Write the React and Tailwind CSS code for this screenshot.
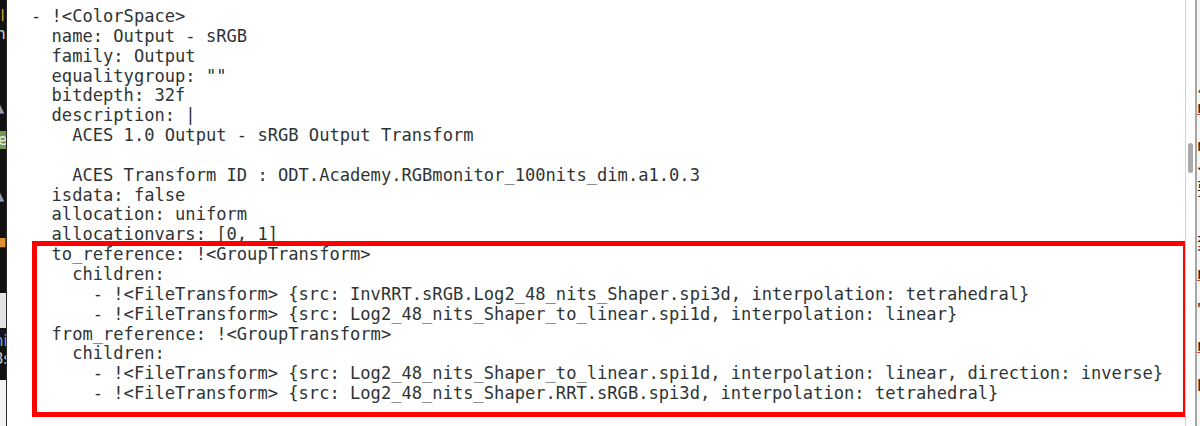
const lines = [
  '- !<ColorSpace>',
  '  name: Output - sRGB',
  '  family: Output',
  '  equalitygroup: ""',
  '  bitdepth: 32f',
  '  description: |',
  '    ACES 1.0 Output - sRGB Output Transform',
  '',
  '    ACES Transform ID : ODT.Academy.RGBmonitor_100nits_dim.a1.0.3',
  '  isdata: false',
  '  allocation: uniform',
  '  allocationvars: [0, 1]',
  '  to_reference: !<GroupTransform>',
  '    children:',
  '      - !<FileTransform> {src: InvRRT.sRGB.Log2_48_nits_Shaper.spi3d, interpolation: tetrahedral}',
  '      - !<FileTransform> {src: Log2_48_nits_Shaper_to_linear.spi1d, interpolation: linear}',
  '  from_reference: !<GroupTransform>',
  '    children:',
  '      - !<FileTransform> {src: Log2_48_nits_Shaper_to_linear.spi1d, interpolation: linear, direction: inverse}',
  '      - !<FileTransform> {src: Log2_48_nits_Shaper.RRT.sRGB.spi3d, interpolation: tetrahedral}',
];

// partial glyphs of the window on the right edge
const sideGlyphs = [
  { t: 'く', cls: 'h-[26px]' },
  { t: '', cls: 'h-[38px]' },
  { t: 'ハ', cls: 'h-[20px]' },
  { t: 'n', cls: 'h-[38px] underline decoration-red-500' },
  { t: 'n', cls: 'h-[20px]' },
  { t: '、', cls: 'h-[24px]' },
  { t: '要', cls: 'h-[54px]' },
  { t: '変', cls: 'h-[30px]' },
  { t: 'n', cls: 'h-[36px] underline decoration-red-500' },
  { t: "'s", cls: 'h-[36px]' },
  { t: 'n', cls: 'h-[40px] underline decoration-red-500' },
  { t: 'l', cls: 'h-[30px]' },
];

function LeftStrip() {
  return (
    <div className="w-[7px] shrink-0 h-full bg-[#121212] border-r border-[#2a2a2a] overflow-hidden flex flex-col text-[15px] leading-[18px] font-['DejaVu_Sans',sans-serif]">
      <div className="h-[7px]" />
      <div className="text-[#e0a040] -ml-[9px]">gl</div>
      <div className="text-[#cfd8e0] -ml-[9px]">m</div>
      <div className="h-[56px]" />
      <div className="text-[#8aa0c0] -ml-[5px] text-[12px]">&#9650;</div>
      <div className="h-[14px]" />
      <div className="h-[18px] bg-[#6f9a52] text-[#e8f0e0] -ml-[2px]">e</div>
      <div className="h-[38px]" />
      <div className="text-[#8aa0c0] -ml-[5px] text-[12px]">&#9650;</div>
      <div className="h-[28px]" />
      <div className="text-[#e09030] -ml-[5px] text-[12px]">&#9632;</div>
      <div className="h-[42px]" />
      <div className="h-[35px] bg-[#e4e4e4]" />
      <div className="text-[#7ab0e8] -ml-[6px] mt-[4px]">ni</div>
      <div className="text-[#c8c8c8] -ml-[6px]">3s</div>
      <div className="h-[12px]" />
      <div className="flex-1 bg-[#f2f2f2]" />
    </div>
  );
}

function Editor() {
  return (
    <div className="relative flex-1 h-full bg-white border-r border-[#d4d4d4] overflow-hidden">
      <pre className="pt-[7px] pl-[24px] m-0 text-[17.1px] leading-[19.85px] text-[#2e3436] font-['DejaVu_Sans_Mono',monospace] whitespace-pre">
        {lines.map((l, i) => (
          <div key={i} className="h-[19.85px]">{l}</div>
        ))}
      </pre>
      {/* highlight box drawn over the code */}
      <div className="absolute left-[25px] top-[241px] w-[1156px] h-[176px] border-[5px] border-[#ff0000] pointer-events-none" />
    </div>
  );
}

function Scrollbar() {
  return (
    <div className="w-[9px] shrink-0 h-full bg-white flex flex-col items-center">
      <div className="h-[143px]" />
      <div className="w-[5px] h-[30px] rounded-full bg-[#a9a9a9]" />
    </div>
  );
}

function OtherWindow() {
  return (
    <div className="w-[5px] shrink-0 h-full bg-[#f6f6f6] border-l-2 border-[#a6a6a6] overflow-hidden flex flex-col text-[17px] leading-[18px] text-[#222] font-['Noto_Sans','Noto_Sans_CJK_JP',sans-serif]">
      <div className="h-[14px]" />
      {sideGlyphs.map((g, i) => (
        <div key={i} className={`${g.cls} whitespace-nowrap overflow-hidden`}>{g.t}</div>
      ))}
    </div>
  );
}

export default function App() {
  return (
    <div className="w-[1200px] h-[426px] flex overflow-hidden bg-white">
      <LeftStrip />
      <Editor />
      <Scrollbar />
      <OtherWindow />
    </div>
  );
}
